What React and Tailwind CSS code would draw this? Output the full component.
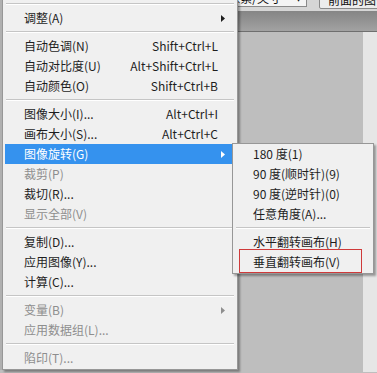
import React from 'react';

const font = { fontFamily: '"Noto Sans CJK SC", "Noto Sans", sans-serif' };

const mainItems = [
  { type: 'sep' },
  { label: '调整(A)', arrow: true },
  { type: 'sep' },
  { label: '自动色调(N)', key: 'Shift+Ctrl+L' },
  { label: '自动对比度(U)', key: 'Alt+Shift+Ctrl+L' },
  { label: '自动颜色(O)', key: 'Shift+Ctrl+B' },
  { type: 'sep' },
  { label: '图像大小(I)...', key: 'Alt+Ctrl+I' },
  { label: '画布大小(S)...', key: 'Alt+Ctrl+C' },
  { label: '图像旋转(G)', arrow: true, active: true },
  { label: '裁剪(P)', disabled: true },
  { label: '裁切(R)...' },
  { label: '显示全部(V)', disabled: true },
  { type: 'sep' },
  { label: '复制(D)...' },
  { label: '应用图像(Y)...' },
  { label: '计算(C)...' },
  { type: 'sep' },
  { label: '变量(B)', arrow: true, disabled: true },
  { label: '应用数据组(L)...', disabled: true },
  { type: 'sep' },
  { label: '陷印(T)...', disabled: true },
];

const subItems = [
  { label: '180 度(1)' },
  { label: '90 度(顺时针)(9)' },
  { label: '90 度(逆时针)(0)' },
  { label: '任意角度(A)...' },
  { type: 'sep' },
  { label: '水平翻转画布(H)' },
  { label: '垂直翻转画布(V)' },
];

const Arrow = ({ color }) => (
  <svg width="4" height="7" viewBox="0 0 4 7" className="absolute right-[10px] top-[7px]">
    <path d="M0 0 L4 3.5 L0 7 Z" fill={color} />
  </svg>
);

const Separator = ({ className }) => (
  <div className={`h-[8px] pt-[3px] ${className}`}>
    <div className="h-px bg-[#c5c5c5]" />
    <div className="h-px bg-white" />
  </div>
);

const MainRow = ({ item }) => {
  let text = 'text-[#1e1e1e]';
  if (item.disabled) text = 'text-[#8e8e8e]';
  if (item.active) text = 'text-white';
  return (
    <div
      className={`relative flex h-[20px] items-center justify-between pl-[19px] pr-[17px] ${text} ${
        item.active ? 'bg-[#3592ee]' : ''
      }`}
    >
      <span>{item.label}</span>
      {item.key && <span>{item.key}</span>}
      {item.arrow && (
        <Arrow color={item.active ? '#ffffff' : item.disabled ? '#8e8e8e' : '#1e1e1e'} />
      )}
    </div>
  );
};

const App = () => {
  return (
    <div className="relative w-[377px] h-[373px] overflow-hidden bg-[#bebebe] text-[12px] leading-[20px]" style={font}>
      {/* options bar */}
      <div className="flex h-[11px] items-end overflow-hidden bg-[#d6d6d6]">
        <div className="ml-[200px] mb-[4px] flex h-[18px] w-[107px] shrink-0 items-center justify-end border border-[#8a8a8a] bg-[#f4f4f4] pr-[4px] leading-[14px] text-[#111]">
          <span className="whitespace-nowrap">像素/英寸</span>
          <span className="ml-[14px] text-[7px]">▼</span>
        </div>
        <div className="ml-[12px] mb-[2px] flex h-[18px] shrink-0 items-center rounded-[2px] border border-[#8a8a8a] bg-[#ececec] px-[8px] leading-[14px] text-[#111] whitespace-nowrap">
          前面的图像
        </div>
      </div>
      {/* tab band */}
      <div className="h-[21px] border-b border-[#6f6f6f] bg-gradient-to-b from-[#858585] to-[#a2a2a2]" />
      {/* canvas */}
      <div className="flex h-[340px]">
        <div className="w-[363px] bg-[#bebebe]" />
        <div className="flex-1 bg-[#e6e6e6]" />
      </div>

      {/* left panel edge */}
      <div className="absolute left-0 top-0 h-[370px] w-[2px] bg-[#b0b0b0]" />

      {/* main menu */}
      <div className="absolute left-[2px] top-0 w-[236px] border-l border-r border-b border-[#979797] bg-[#f0f0f0] pb-[1px] shadow-[2px_2px_2px_rgba(0,0,0,0.35)]">
        {mainItems.map((item, i) =>
          item.type === 'sep' ? (
            <Separator key={i} className="mx-[3px]" />
          ) : (
            <div key={i} className="mx-[2px]">
              <MainRow item={item} />
            </div>
          )
        )}
      </div>

      {/* submenu */}
      <div className="absolute left-[232px] top-[143px] w-[142px] border border-[#979797] bg-[#f0f0f0] pb-[1px] shadow-[2px_2px_2px_rgba(0,0,0,0.35)]">
        {subItems.map((item, i) =>
          item.type === 'sep' ? (
            <Separator key={i} className="mx-[3px]" />
          ) : (
            <div key={i} className="flex h-[20px] items-center pl-[20px] text-[#1e1e1e]">
              {item.label}
            </div>
          )
        )}
      </div>

      {/* red annotation box */}
      <div className="absolute left-[239px] top-[249px] h-[24px] w-[123px] border border-[#cf3a3a]" />
    </div>
  );
};

export default App;
